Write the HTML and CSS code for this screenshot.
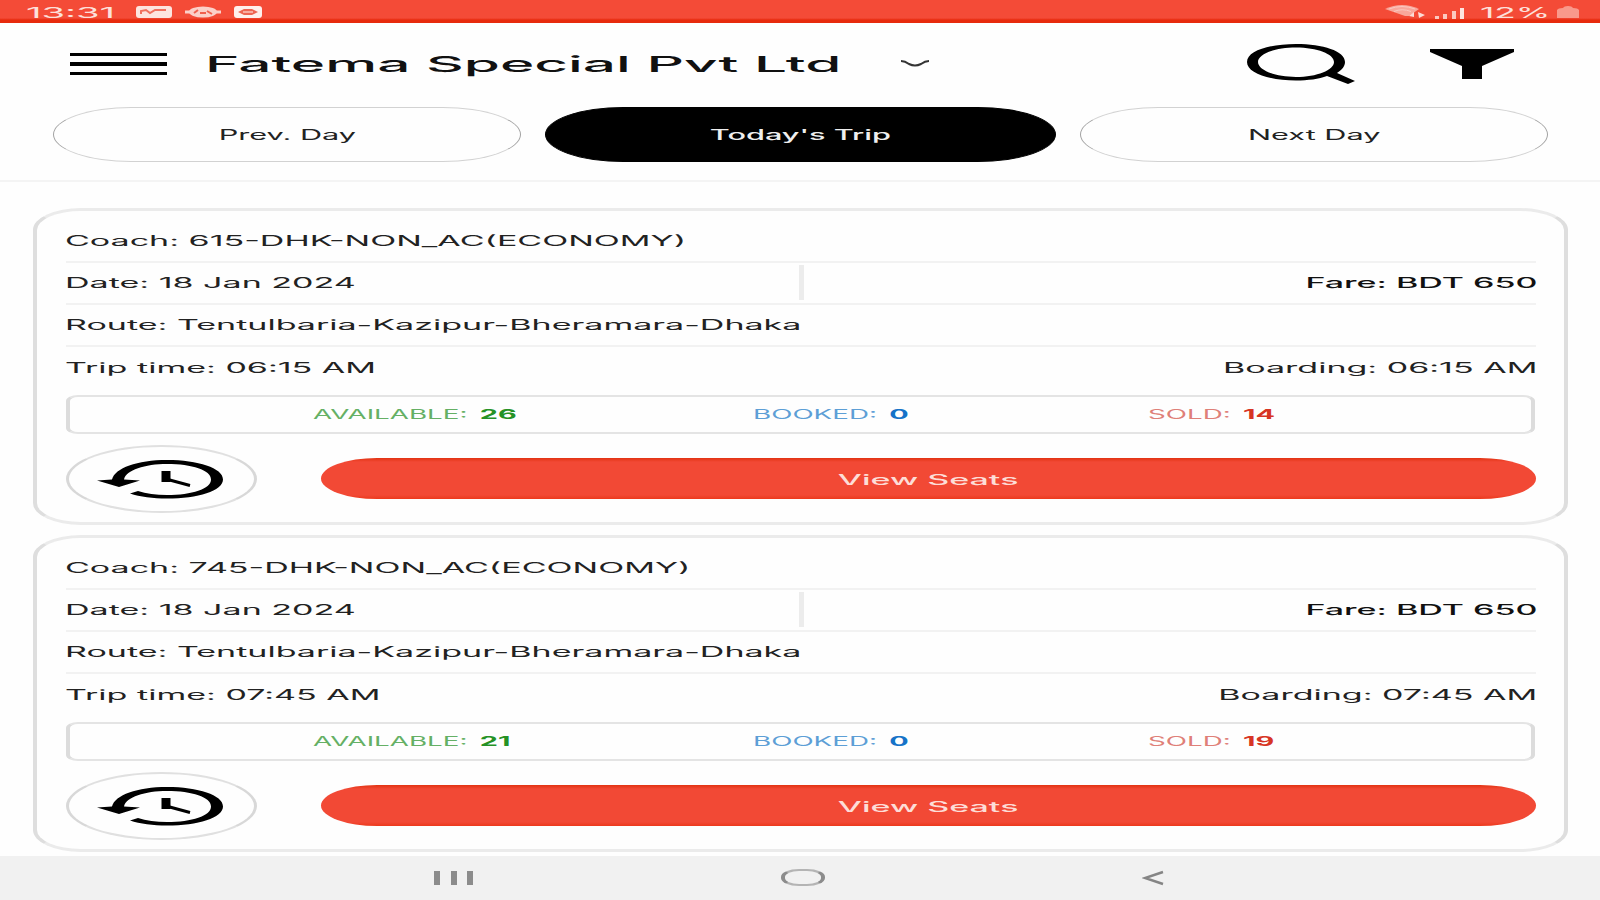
FILE: index.html
```
<!DOCTYPE html>
<html lang="en">
<head>
    <meta charset="UTF-8">
    <meta name="viewport" content="width=device-width, initial-scale=1.0">
    <title>Fatema Special Pvt Ltd - Today's Trip</title>
    <link rel="stylesheet" href="styles.css">
</head>
<body>
    <div class="status-bar">
        <span class="wide status-time">13:31</span>
        <svg class="status-icon" width="36" height="12" viewBox="0 0 36 12">
            <rect width="36" height="12" rx="3" fill="#fde4df"/>
            <path d="M5 8V5l5-1 4 3 5-3h11" fill="none" stroke="#f0705f" stroke-width="2"/>
        </svg>
        <svg class="status-icon" width="36" height="12" viewBox="0 0 36 12">
            <ellipse cx="18" cy="6" rx="14" ry="5.5" fill="#fbd0c9"/>
            <path d="M0 6h36" stroke="#fbd0c9" stroke-width="3"/>
            <path d="M9 7l4-3M15 7h6M22 5l5 3" stroke="#f0604e" stroke-width="2"/>
        </svg>
        <svg class="status-icon" width="28" height="12" viewBox="0 0 28 12">
            <rect width="28" height="12" rx="3" fill="#fff0ed"/>
            <path d="M4 6l6-3h8l6 3-6 3h-8z" fill="#ee6553"/>
            <path d="M9 6h10" stroke="#fbc4bb" stroke-width="1.5"/>
        </svg>
        <div class="status-right">
            <svg width="42" height="14" viewBox="0 0 42 14">
                <path d="M0 4Q17-4 34 4L24 11H20z" fill="#f9a79b"/>
                <path d="M4 4Q17-1 30 4M9 6.500Q17 3 26 6.500" fill="none" stroke="#fbc9c1"/>
                <path d="M24 11l5-4v5zM33 7l7 3-6 3z" fill="#fcdcd6"/>
            </svg>
            <svg class="signal" width="31" height="12" viewBox="0 0 31 12">
                <path d="M0 9h4v3H0zM8 7h4v5H8zM17 4h4v8h-4z" fill="#fbc9c1"/>
                <path d="M25 1h4v11h-4z" fill="#fde4df"/>
            </svg>
            <span class="wide status-battery">12%</span>
            <svg width="24" height="14" viewBox="0 0 24 14">
                <path d="M1 13V5Q2 3 7 3Q8 1 12 1T17 3Q22 3 23 5V13z" fill="#f9998b"/>
            </svg>
        </div>
    </div>

    <header class="header">
        <div class="title-bar">
            <div class="menu"><i></i><i></i><i></i></div>
            <div class="title"><span class="wide">Fatema Special Pvt Ltd</span></div>
            <svg class="chevron" width="32" height="10" viewBox="0 0 32 10">
                <path d="M2 2Q6 2 10 5Q16 8 22 5Q26 2 30 2" fill="none" stroke="#333" stroke-width="2"/>
            </svg>
            <svg class="search" width="108" height="42" viewBox="0 0 108 42">
                <path fill-rule="evenodd" fill="#000" d="M49 1C76 1 98 8 98 19C98 23 95 27 90 30L108 38L101 41L80 33C72 36 61 37.500 49 37.500C22 37.500 0 30 0 19S22 1 49 1zM49 4.500C28 4.500 11 11 11 19S28 34 49 34S87 27 87 19S70 4.500 49 4.500z"/>
            </svg>
            <svg class="filter" width="84" height="30" viewBox="0 0 84 30">
                <path d="M0 0H84V3L52 17V30H32V17L0 3z"/>
            </svg>
        </div>
        <nav class="days">
            <button class="day prev"><span class="wide">Prev. Day</span></button>
            <button class="day today"><span class="wide">Today's Trip</span></button>
            <button class="day next"><span class="wide">Next Day</span></button>
        </nav>
    </header>

    <main class="trips">
        <section class="card">
            <div class="row"><span class="wide">Coach: 615-DHK-NON_AC(ECONOMY)</span></div>
            <div class="row split">
                <span class="wide">Date: 18 Jan 2024</span>
                <span class="wide right fare">Fare: BDT 650</span>
            </div>
            <div class="row"><span class="wide">Route: Tentulbaria-Kazipur-Bheramara-Dhaka</span></div>
            <div class="row last">
                <span class="wide">Trip time: 06:15 AM</span>
                <span class="wide right">Boarding: 06:15 AM</span>
            </div>
            <div class="stats">
                <div class="stat available"><span class="wide">AVAILABLE: <b>26</b></span></div>
                <div class="stat booked"><span class="wide">BOOKED: <b>0</b></span></div>
                <div class="stat sold"><span class="wide">SOLD: <b>14</b></span></div>
            </div>
            <div class="actions">
                <button class="history">
                    <svg width="126" height="40" viewBox="0 0 126 40">
                        <path fill="#000" d="M0 21.500L15 20.500C18 9 40 1 70 1C101 1 126 9 126 20.500S101 39.500 70 39.500C56 39.500 43 38 33 34.500L41 32C49 34.500 59 36 70 36C95 36 114 30 114 20.500S95 5 70 5C48 5 29 11 27 20.500L43 21.500L22 28z"/>
                        <path fill="none" stroke="#000" stroke-width="3" d="M69 20L93 26.500"/>
                        <path stroke="#000" stroke-width="9" d="M69 12V23"/>
                    </svg>
                </button>
                <button class="view-seats"><span class="wide">View Seats</span></button>
            </div>
        </section>

        <section class="card">
            <div class="row"><span class="wide">Coach: 745-DHK-NON_AC(ECONOMY)</span></div>
            <div class="row split">
                <span class="wide">Date: 18 Jan 2024</span>
                <span class="wide right fare">Fare: BDT 650</span>
            </div>
            <div class="row"><span class="wide">Route: Tentulbaria-Kazipur-Bheramara-Dhaka</span></div>
            <div class="row last">
                <span class="wide">Trip time: 07:45 AM</span>
                <span class="wide right">Boarding: 07:45 AM</span>
            </div>
            <div class="stats">
                <div class="stat available"><span class="wide">AVAILABLE: <b>21</b></span></div>
                <div class="stat booked"><span class="wide">BOOKED: <b>0</b></span></div>
                <div class="stat sold"><span class="wide">SOLD: <b>19</b></span></div>
            </div>
            <div class="actions">
                <button class="history">
                    <svg width="126" height="40" viewBox="0 0 126 40">
                        <path fill="#000" d="M0 21.500L15 20.500C18 9 40 1 70 1C101 1 126 9 126 20.500S101 39.500 70 39.500C56 39.500 43 38 33 34.500L41 32C49 34.500 59 36 70 36C95 36 114 30 114 20.500S95 5 70 5C48 5 29 11 27 20.500L43 21.500L22 28z"/>
                        <path fill="none" stroke="#000" stroke-width="3" d="M69 20L93 26.500"/>
                        <path stroke="#000" stroke-width="9" d="M69 12V23"/>
                    </svg>
                </button>
                <button class="view-seats"><span class="wide">View Seats</span></button>
            </div>
        </section>
    </main>

    <footer class="nav-bar">
        <div class="recent"><i></i><i></i><i></i></div>
        <div class="home"></div>
        <svg class="back" width="24" height="16" viewBox="0 0 24 16">
            <path d="M21 2L3 8L21 14" fill="none" stroke="#858585" stroke-width="2.500"/>
        </svg>
    </footer>
</body>
</html>
```
FILE: styles.css
```
* {
    margin: 0;
    padding: 0;
    box-sizing: border-box;
}

body {
    font-family: Inter, Roboto, sans-serif;
    font-size: 14px;
    color: #222;
    background: #fefefe;
    width: 1600px;
    height: 900px;
    overflow: hidden;
    display: flex;
    flex-direction: column;
}

button {
    font: inherit;
    color: inherit;
    background: none;
    border: none;
    cursor: pointer;
    display: flex;
    align-items: center;
    justify-content: center;
}

svg {
    display: block;
    flex: none;
}

/* extended lettering */
.wide {
    display: inline-block;
    white-space: nowrap;
    transform: scaleX(2.43);
    transform-origin: left center;
}

.wide.right {
    transform-origin: right center;
}

/* status bar */
.status-bar {
    flex: none;
    height: 22.5px;
    padding: 2px 20px 0 26px;
    display: flex;
    align-items: center;
    color: #fde0db;
    font-size: 15px;
    background: linear-gradient(#f44b37 0, #f44b37 18px, #e72a0c 20px, #e72a0c 22px);
}

.status-time {
    width: 110px;
    transform: scaleX(2.54);
}

.status-icon + .status-icon {
    margin-left: 13px;
}

.status-right {
    margin-left: auto;
    display: flex;
    align-items: center;
}

.signal {
    margin: 2px 14px 0 8px;
}

.status-battery {
    width: 76px;
    transform: scaleX(2.35);
}

/* header */
.header {
    flex: none;
    height: 159px;
    border-bottom: 2px solid #f4f4f4;
}

.title-bar {
    height: 84.5px;
    padding: 0 86px 2px 70px;
    display: flex;
    align-items: center;
}

.menu {
    width: 97px;
    display: flex;
    flex-direction: column;
    gap: 6px;
}

.menu i {
    height: 3.5px;
    background: #000;
}

.title {
    width: 732px;
    padding-left: 38px;
    font-size: 22px;
    font-weight: 500;
    color: #111;
}

.title .wide {
    transform: scaleX(2.66);
}

.search {
    margin-left: auto;
}

.filter {
    margin-left: 75px;
}

.days {
    display: flex;
    padding: 0 52px 0 53px;
    gap: 24px;
}

.day {
    height: 55px;
    flex: 469 0 0;
    border: 1.5px solid #d2d2d2;
    border-left-color: #a2a2a2;
    border-right-color: #a2a2a2;
    border-radius: 80px / 28px;
}

.day .wide {
    transform: scaleX(2.19);
    transform-origin: center;
}

.today {
    flex-grow: 511;
    background: #000;
    border-color: #000;
    color: #eee;
    font-weight: 500;
}

/* trips */
.trips {
    flex: none;
    height: 674px;
    padding: 26px 32px 0 33px;
}

.card {
    height: 317px;
    margin-bottom: 10px;
    padding: 10px 28px 0 29px;
    border: 3px solid #ebebeb;
    border-left: 4px solid #dedede;
    border-right: 4px solid #dedede;
    border-radius: 48px / 22px;
}

.row {
    height: 42px;
    display: flex;
    align-items: center;
    justify-content: space-between;
    border-bottom: 2px solid #f2f2f2;
}

.row .wide {
    margin: 0 -1px;
}

.row.split {
    background: linear-gradient(#ececec, #ececec) 733px center / 5px 35px no-repeat;
}

.row.last {
    border-bottom: none;
}

.fare {
    font-weight: 500;
    color: #111;
}

.stats {
    height: 39px;
    margin-top: 6px;
    margin-right: 1px;
    padding-left: 243px;
    display: flex;
    align-items: center;
    border: 2px solid #e4e4e4;
    border-left: 4px solid #dcdcdc;
    border-right: 4px solid #dcdcdc;
    border-radius: 12px / 6px;
    font-size: 12.5px;
}

.stat {
    flex: none;
    width: 440px;
}

.stat .wide {
    transform: scaleX(2.22);
}

.stat b {
    margin-left: 2px;
    font-size: 13px;
}

.available {
    color: #65b065;
}

.available b {
    color: #259225;
}

.booked {
    width: 395px;
    color: #5d9fd6;
}

.booked b {
    color: #1673c8;
}

.sold {
    width: 300px;
    color: #df8078;
}

.sold b {
    color: #d73524;
}

.actions {
    display: flex;
    align-items: center;
    margin-top: 11px;
}

.history {
    width: 191px;
    height: 68px;
    padding-right: 3px;
    border: 2px solid #e0e0e0;
    border-left: 3px solid #d8d8d8;
    border-right: 3px solid #d8d8d8;
    border-radius: 50%;
}

.view-seats {
    flex: 1;
    height: 41px;
    margin-left: 64px;
    padding-top: 1px;
    border-radius: 56px / 20.5px;
    color: #fdddd7;
    font-weight: 500;
    background: linear-gradient(#e23312 0, #f24935 4px, #f24935 37px, #ec391c 41px);
}

.view-seats .wide {
    transform-origin: center;
}

/* bottom navigation */
.nav-bar {
    flex: 1;
    display: flex;
    align-items: center;
    padding-left: 434px;
    background: #f1f1f1;
}

.recent {
    width: 39px;
    display: flex;
    justify-content: space-between;
}

.recent i {
    width: 6px;
    height: 14px;
    background: #8c8c8c;
}

.home {
    width: 44px;
    height: 17px;
    margin-left: 308px;
    border: 2px solid #b4b4b4;
    border-left: 4px solid #8c8c8c;
    border-right: 4px solid #8c8c8c;
    border-radius: 18px / 8px;
}

.back {
    margin-left: 317px;
}
```
